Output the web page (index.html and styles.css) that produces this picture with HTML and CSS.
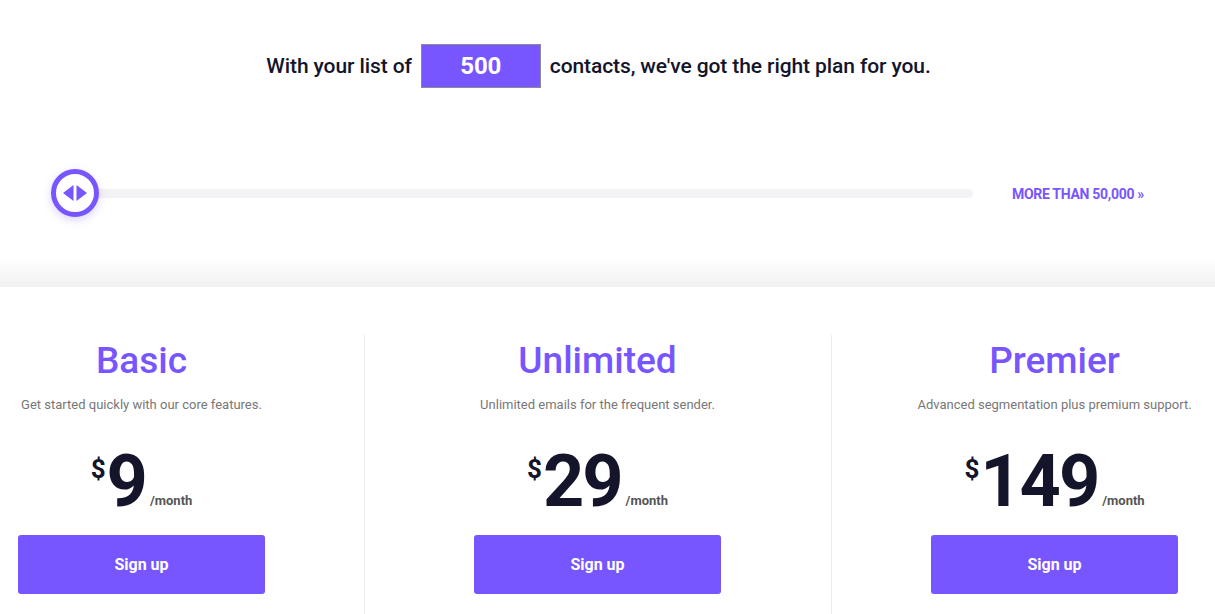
FILE: index.html
```html
<!DOCTYPE html>
<html lang="en">
<head>
<meta charset="utf-8">
<title>Pricing</title>
<link rel="stylesheet" href="styles.css">
</head>
<body>
<section class="top">
  <div class="headline">
    <span>With your list of</span>
    <div class="count">500</div>
    <span>contacts, we've got the right plan for you.</span>
  </div>
  <div class="slider-row">
    <div class="slider">
      <div class="track"></div>
      <div class="handle">
        <svg viewBox="0 0 28 18" width="28" height="18" aria-hidden="true">
          <polygon points="12.5,1 12.5,17 2,9" fill="#7856ff"/>
          <polygon points="15.5,1 15.5,17 26,9" fill="#7856ff"/>
        </svg>
      </div>
    </div>
    <a class="more" href="#">MORE THAN 50,000 »</a>
  </div>
</section>
<section class="plans">
  <div class="plan plan-basic">
    <div class="plan-inner">
      <h2 class="plan-title">Basic</h2>
      <p class="plan-desc">Get started quickly with our core features.</p>
      <div class="price"><span class="cur">$</span><span class="amt">9</span><span class="per">/month</span></div>
      <a class="btn" href="#">Sign up</a>
    </div>
  </div>
  <div class="plan plan-unlimited">
    <div class="plan-inner">
      <h2 class="plan-title">Unlimited</h2>
      <p class="plan-desc">Unlimited emails for the frequent sender.</p>
      <div class="price"><span class="cur">$</span><span class="amt">29</span><span class="per">/month</span></div>
      <a class="btn" href="#">Sign up</a>
    </div>
  </div>
  <div class="plan plan-premier">
    <div class="plan-inner">
      <h2 class="plan-title">Premier</h2>
      <p class="plan-desc">Advanced segmentation plus premium support.</p>
      <div class="price"><span class="cur">$</span><span class="amt">149</span><span class="per">/month</span></div>
      <a class="btn" href="#">Sign up</a>
    </div>
  </div>
</section>
</body>
</html>
```
FILE: styles.css
```css
* { box-sizing: border-box; }
html, body { margin: 0; padding: 0; }
body {
  font-family: Roboto, "Liberation Sans", Arial, sans-serif;
  background: #fff;
  color: #14142b;
  overflow: hidden;
}
.top {
  height: 287px;
  padding-top: 44px;
  background: linear-gradient(to bottom, #fff 0, #fff 258px, #f1f1f2 287px);
}
.headline {
  display: flex;
  justify-content: center;
  align-items: center;
  gap: 9px;
  padding-right: 18px;
  font-size: 21px;
  font-weight: 500;
  color: #14142b;
  letter-spacing: -0.1px;
}
.count {
  width: 120px;
  height: 44px;
  background: #7856ff;
  border: 1px solid #8a8a9a;
  color: #fff;
  font-size: 24px;
  font-weight: 700;
  display: flex;
  align-items: center;
  justify-content: center;
}
.slider-row {
  display: flex;
  align-items: center;
  margin-top: 81px;
  padding-left: 51px;
}
.slider {
  position: relative;
  width: 922px;
  height: 48px;
}
.track {
  position: absolute;
  left: 24px;
  right: 0;
  top: 20px;
  height: 9px;
  border-radius: 5px;
  background: #f3f3f5;
}
.handle {
  position: absolute;
  left: 0;
  top: 0;
  width: 48px;
  height: 48px;
  border-radius: 50%;
  border: 5px solid #7856ff;
  background: #fff;
  box-shadow: 0 3px 8px rgba(120, 86, 255, 0.25);
  display: flex;
  align-items: center;
  justify-content: center;
}
.more {
  margin-left: 39px;
  margin-top: 2px;
  color: #7856ff;
  font-size: 14px;
  font-weight: 700;
  text-decoration: none;
  letter-spacing: -0.3px;
}
.plans {
  display: flex;
  margin-top: 48px;
}
.plan {
  display: flex;
  min-height: 280px;
}
.plan-basic { width: 364px; padding-left: 18px; }
.plan-unlimited { width: 467px; padding-left: 109px; border-left: 1px solid #ececee; }
.plan-premier { flex: 1; padding-left: 99px; border-left: 1px solid #ececee; }
.plan-inner {
  width: 247px;
  display: flex;
  flex-direction: column;
  align-items: center;
}
.plan-title {
  margin: 4px 0 0;
  font-size: 37px;
  line-height: 44px;
  font-weight: 500;
  color: #7856ff;
  white-space: nowrap;
}
.plan-desc {
  margin: 13px 0 0;
  font-size: 13px;
  line-height: 18px;
  color: #777;
  white-space: nowrap;
}
.price {
  margin-top: 38px;
  display: flex;
  align-items: flex-start;
  height: 71px;
  white-space: nowrap;
}
.cur {
  font-size: 26px;
  font-weight: 700;
  line-height: 1;
  margin-top: 4px;
  margin-right: 1px;
}
.amt {
  font-size: 72px;
  font-weight: 700;
  line-height: 60px;
  letter-spacing: -2px;
}
.per {
  align-self: flex-end;
  font-size: 13px;
  font-weight: 700;
  color: #555;
  margin-left: 4px;
  margin-bottom: 15px;
}
.btn {
  margin-top: 12px;
  width: 247px;
  height: 59px;
  background: #7856ff;
  border-radius: 3px;
  color: #fff;
  font-size: 16px;
  font-weight: 700;
  text-decoration: none;
  display: flex;
  align-items: center;
  justify-content: center;
}
```
